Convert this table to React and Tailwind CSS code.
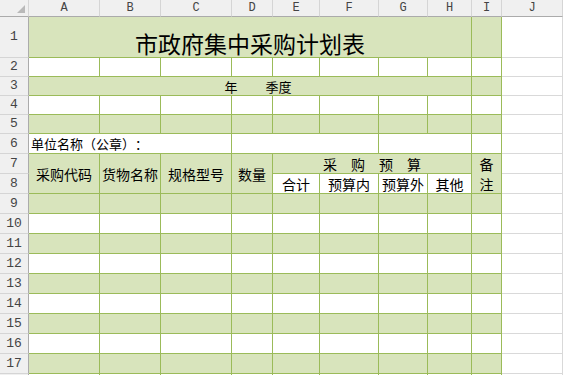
const COLS = ['A', 'B', 'C', 'D', 'E', 'F', 'G', 'H', 'I', 'J']

const CJK = "font-['Noto_Sans_CJK_SC',sans-serif] text-black [text-spacing-trim:space-all]"
const GREEN = 'bg-[#d8e4bc] border-r border-b border-[#9bbb59]'
const WHITE = 'bg-white border-r border-b border-[#9bbb59]'
const JCELL = 'bg-white border-r border-b border-[#d9d9d9]'
const ROWHEAD =
  "bg-[#f0f0f0] border-r border-b border-r-[#ababab] border-b-[#d5d5d5] flex items-center justify-center text-[13px] text-[#444] font-['Liberation_Mono',monospace]"

function RowHead({ n }) {
  return <div className={ROWHEAD}>{n}</div>
}

function PlainRow({ n, green }) {
  return (
    <>
      <RowHead n={n} />
      {COLS.slice(0, 9).map(c => (
        <div key={c} className={green ? GREEN : WHITE} />
      ))}
      <div className={JCELL} />
    </>
  )
}

export default function App() {
  return (
    <div className="w-[563px] h-[375px] overflow-hidden bg-white">
      <div className="grid grid-cols-[29px_71px_61px_71px_41px_47px_59px_49px_44px_30px_1fr] grid-rows-[17px_41px_19px_19px_19px_19px_repeat(13,20px)]">
        {/* column headers */}
        <div className="bg-[#f0f0f0] border-r border-b border-r-[#d5d5d5] border-b-[#ababab] flex items-end justify-end pr-[3px] pb-[3px]">
          <svg width="8" height="8" viewBox="0 0 8 8">
            <polygon points="8,0 8,8 0,8" fill="#b9b9b9" />
          </svg>
        </div>
        {COLS.map(c => (
          <div key={c}
            className="bg-[#f0f0f0] border-r border-b border-r-[#d5d5d5] border-b-[#ababab] flex items-center justify-center text-[12px] leading-none text-[#444] font-['Liberation_Mono',monospace]">
            {c}
          </div>
        ))}

        {/* row 1: title */}
        <RowHead n={1} />
        <div className={`${GREEN} col-span-8 flex items-end justify-center pb-[2px] ${CJK} text-[23px] leading-none`}>
          市政府集中采购计划表
        </div>
        <div className={GREEN} />
        <div className={JCELL} />

        <PlainRow n={2} />

        {/* row 3 */}
        <RowHead n={3} />
        <div className={`${GREEN} col-span-8 flex items-center justify-center pl-[16px] ${CJK} text-[13px] leading-none`}>
          <span>年</span>
          <span className="ml-[28px]">季度</span>
        </div>
        <div className={GREEN} />
        <div className={JCELL} />

        <PlainRow n={4} />
        <PlainRow n={5} green />

        {/* row 6 */}
        <RowHead n={6} />
        <div className={`${WHITE} col-span-3 flex items-center pl-[2px] ${CJK} text-[13px] leading-none whitespace-nowrap`}>
          单位名称（公章）：
        </div>
        <div className={`${WHITE} col-span-3`} />
        <div className={`${WHITE} col-span-2`} />
        <div className={WHITE} />
        <div className={JCELL} />

        {/* rows 7-8: headers */}
        <RowHead n={7} />
        {['采购代码', '货物名称', '规格型号', '数量'].map(t => (
          <div key={t} className={`${GREEN} row-span-2 flex items-center justify-center ${CJK} text-[14px] leading-none whitespace-nowrap`}>
            {t}
          </div>
        ))}
        <div className={`${GREEN} col-span-4 flex items-center justify-center gap-[14px] ${CJK} text-[14px] leading-none`}>
          <span>采</span><span>购</span><span>预</span><span>算</span>
        </div>
        <div className={`${GREEN} row-span-2 flex flex-col items-center justify-center ${CJK} text-[14px] leading-[20px]`}>
          <span>备</span>
          <span>注</span>
        </div>
        <div className={JCELL} />

        <RowHead n={8} />
        {['合计', '预算内', '预算外', '其他'].map(t => (
          <div key={t} className={`${WHITE} flex items-center justify-center ${CJK} text-[14px] leading-none whitespace-nowrap`}>
            {t}
          </div>
        ))}
        <div className={JCELL} />

        {[9, 10, 11, 12, 13, 14, 15, 16, 17].map(n => (
          <PlainRow key={n} n={n} green={n % 2 === 1} />
        ))}
        {/* row 18 only peeks in by a pixel */}
        <PlainRow n="" />
      </div>
    </div>
  )
}
